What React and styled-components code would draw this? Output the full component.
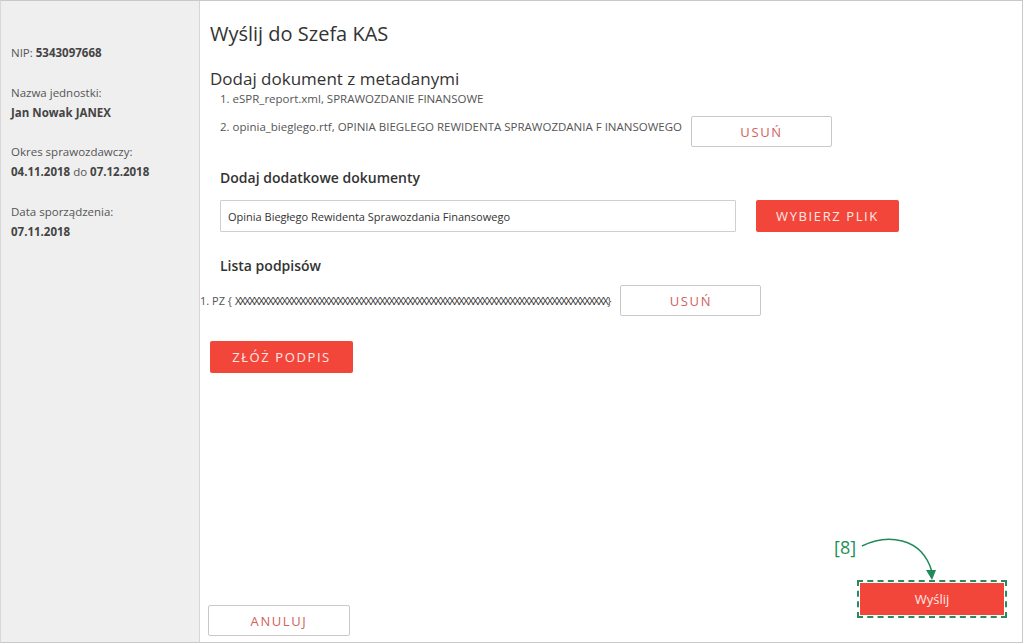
import styled, { createGlobalStyle } from "styled-components";

const GlobalStyle = createGlobalStyle`
  html, body {
    margin: 0;
    padding: 0;
    background: #fff;
  }
  * {
    box-sizing: border-box;
  }
  body {
    font-family: "Open Sans", "Noto Sans", Arial, sans-serif;
    color: #333;
  }
`;

const scrambled = "X".repeat(80);

function App() {
  return (
    <>
      <GlobalStyle />
      <Frame>
        <Sidebar>
          <InfoRow>
            NIP: <b>5343097668</b>
          </InfoRow>
          <InfoBlock>
            <InfoRow>Nazwa jednostki:</InfoRow>
            <InfoRow>
              <b>Jan Nowak JANEX</b>
            </InfoRow>
          </InfoBlock>
          <InfoBlock>
            <InfoRow>Okres sprawozdawczy:</InfoRow>
            <InfoRow>
              <b>04.11.2018</b> do <b>07.12.2018</b>
            </InfoRow>
          </InfoBlock>
          <InfoBlock>
            <InfoRow>Data sporządzenia:</InfoRow>
            <InfoRow>
              <b>07.11.2018</b>
            </InfoRow>
          </InfoBlock>
        </Sidebar>

        <Main>
          <Title>Wyślij do Szefa KAS</Title>
          <Subtitle>Dodaj dokument z metadanymi</Subtitle>
          <DocList>
            <DocItem>1. eSPR_report.xml, SPRAWOZDANIE FINANSOWE</DocItem>
            <DocItem>
              2. opinia_bieglego.rtf, OPINIA BIEGLEGO REWIDENTA SPRAWOZDANIA F INANSOWEGO
              <OutlineButton $width={141}>USUŃ</OutlineButton>
            </DocItem>
          </DocList>

          <Section>
            <SectionTitle>Dodaj dodatkowe dokumenty</SectionTitle>
            <FileRow>
              <FileInput readOnly value="Opinia Biegłego Rewidenta Sprawozdania Finansowego" />
              <RedButton $width={143}>WYBIERZ PLIK</RedButton>
            </FileRow>
          </Section>

          <Section>
            <SectionTitle>Lista podpisów</SectionTitle>
            <SignRow>
              <SignText>
                1. PZ {"{"}
                <Scrambled>{scrambled}</Scrambled>
                {"}"}
              </SignText>
              <OutlineButton $width={141}>USUŃ</OutlineButton>
            </SignRow>
          </Section>

          <SignButtonRow>
            <RedButton $width={143}>ZŁÓŻ PODPIS</RedButton>
          </SignButtonRow>

          <Footer>
            <OutlineButton $width={142}>ANULUJ</OutlineButton>
            <SendWrap>
              <Callout>
                <CalloutLabel>[8]</CalloutLabel>
                <svg width="90" height="48" viewBox="0 0 90 48">
                  <path
                    d="M6 10 C 30 -2, 66 0, 76 36"
                    fill="none"
                    stroke="#1f8a5a"
                    strokeWidth="1.4"
                  />
                  <path d="M70 34 L80 34 L76 44 Z" fill="#1f8a5a" />
                </svg>
              </Callout>
              <Highlight>
                <SendButton>Wyślij</SendButton>
              </Highlight>
            </SendWrap>
          </Footer>
        </Main>
      </Frame>
    </>
  );
}

const Frame = styled.div`
  width: 1023px;
  height: 643px;
  display: flex;
  border-top: 1px solid #c8c8c8;
  border-right: 1px solid #c8c8c8;
  border-bottom: 1px solid #c8c8c8;
  border-left: 1px solid #d8d8d8;
  overflow: hidden;
`;

const Sidebar = styled.aside`
  width: 199px;
  flex-shrink: 0;
  background: #efefef;
  border-right: 1px solid #d6d6d6;
  padding: 42px 0 0 10px;
  font-size: 11.5px;
  color: #555;

  b {
    font-weight: 700;
    color: #444;
  }
`;

const InfoBlock = styled.div`
  margin-top: 19.5px;
`;

const InfoRow = styled.div`
  line-height: 20px;
`;

const Main = styled.main`
  flex: 1;
  display: flex;
  flex-direction: column;
  padding: 19px 0 6px 10px;
  min-width: 0;
`;

const Title = styled.h1`
  margin: 0;
  font-size: 20px;
  font-weight: 400;
  color: #333;
  line-height: 28px;
`;

const Subtitle = styled.h2`
  margin: 20px 0 0;
  font-size: 17px;
  font-weight: 400;
  color: #333;
  line-height: 22px;
`;

const DocList = styled.div`
  margin: -2px 0 -6px;
  padding-left: 10px;
  font-size: 11.5px;
  color: #555;
`;

const DocItem = styled.div`
  display: flex;
  align-items: flex-start;
  gap: 9px;
  line-height: 21px;
  margin-bottom: 7px;
`;

const Section = styled.section`
  padding-left: 10px;
  margin-top: 20px;
`;

const SectionTitle = styled.h3`
  margin: 0 0 12px;
  font-size: 14px;
  font-weight: 600;
  color: #333;
  line-height: 20px;
`;

const FileRow = styled.div`
  display: flex;
  align-items: center;
  gap: 20px;
  margin-bottom: 4px;
`;

const FileInput = styled.input`
  width: 516px;
  height: 32px;
  border: 1px solid #cfcfcf;
  border-radius: 1px;
  padding: 0 7px;
  font-family: "Open Sans", Arial, sans-serif;
  font-size: 11px;
  color: #333;
  outline: none;
`;

const SignRow = styled.div`
  display: flex;
  align-items: center;
  gap: 9px;
  margin-left: -20px;
  margin-top: -3px;
`;

const SignText = styled.div`
  font-size: 11px;
  color: #555;
  white-space: nowrap;
  display: flex;
  align-items: center;
`;

const Scrambled = styled.span`
  display: inline-block;
  margin-left: 3px;
  letter-spacing: -1.7px;
  font-size: 11px;
  color: #3a3a3a;
`;

const ButtonBase = styled.button`
  width: ${(p) => p.$width}px;
  height: 31px;
  border-radius: 2px;
  font-family: "Open Sans", Arial, sans-serif;
  font-size: 13px;
  letter-spacing: 1.6px;
  cursor: pointer;
  flex-shrink: 0;
`;

const OutlineButton = styled(ButtonBase)`
  background: #fff;
  border: 1px solid #c9c9c9;
  color: #d2615b;
`;

const RedButton = styled(ButtonBase)`
  height: 32px;
  background: #f3463a;
  border: none;
  color: #fde8e6;
`;

const SignButtonRow = styled.div`
  margin-top: 25px;
`;

const Footer = styled.div`
  margin-top: auto;
  display: flex;
  justify-content: space-between;
  align-items: flex-end;
  padding-right: 15px;
  margin-left: -2px;
`;

const SendWrap = styled.div`
  position: relative;
  margin-bottom: 18px;
`;

const Callout = styled.div`
  position: absolute;
  left: -23px;
  top: -44px;
  display: flex;
  align-items: flex-start;
`;

const CalloutLabel = styled.span`
  font-size: 18px;
  color: #1e9158;
  line-height: 22px;
`;

const Highlight = styled.div`
  border: 2px dashed #2a8a5c;
  padding: 1px;
`;

const SendButton = styled.button`
  display: block;
  width: 144px;
  height: 32px;
  background: #f3463a;
  border: none;
  color: #fde8e6;
  font-family: "Open Sans", Arial, sans-serif;
  font-size: 13px;
`;

export default App;
